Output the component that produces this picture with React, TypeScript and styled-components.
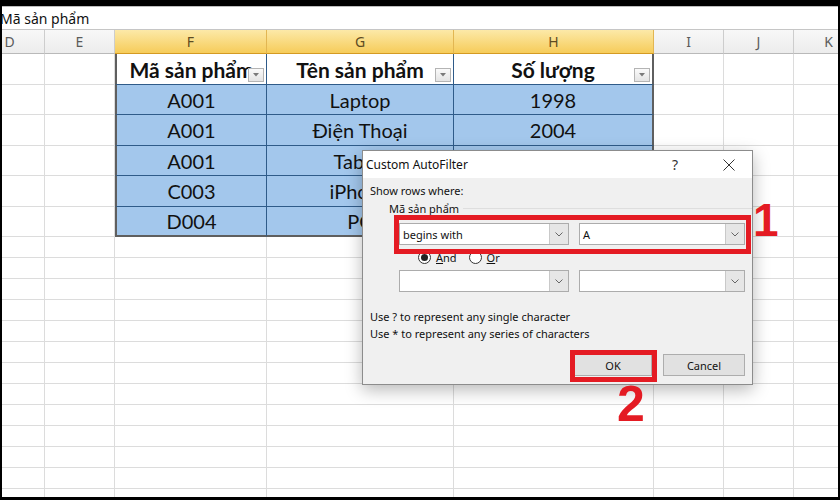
import React from 'react'
import styled, { createGlobalStyle, css } from 'styled-components'

const GlobalStyle = createGlobalStyle`
  html, body {
    margin: 0;
    padding: 0;
    background: #000;
  }
`

const Frame = styled.div`
  position: relative;
  width: 840px;
  height: 500px;
  box-sizing: border-box;
  padding: 6px 2px 3px 2px;
  background: #000;
  overflow: hidden;
  display: flex;
  flex-direction: column;
`

const Sheet = styled.div`
  flex: 1;
  min-height: 0;
  background: #fff;
  display: flex;
  flex-direction: column;
  overflow: hidden;
`

const FormulaBar = styled.div`
  height: 22px;
  flex: none;
  border-top: 1px solid #bdbdbd;
  border-bottom: 1px solid #c6c6c6;
  display: flex;
  align-items: center;
  font-family: 'Noto Sans', sans-serif;
  font-size: 14px;
  color: #111;
  white-space: nowrap;
  text-indent: -2px;
`

const Grid = styled.div`
  margin-left: -27px;
  display: grid;
  grid-template-columns: 70px 70px 152px 187px 200px 70px 70px 70px;
  grid-template-rows: 24px 31px 30px 31px 30px 31px 30px;
  grid-auto-rows: 21px;
`

const ColHead = styled.div<{ $sel?: boolean }>`
  box-sizing: border-box;
  display: flex;
  align-items: center;
  justify-content: center;
  font-family: 'Noto Sans', sans-serif;
  font-size: 14px;
  color: #5b5b5b;
  background: linear-gradient(#f8f8f8, #ececec);
  border-right: 1px solid #cdcdcd;
  border-bottom: 1px solid #b9b9b9;
  ${p => p.$sel && css`
    background: linear-gradient(#fce9a8, #f6cc5a);
    border-right-color: #e2b652;
    border-bottom-color: #d49a22;
    color: #5d4b22;
  `}
`

type Kind = 'plain' | 'head' | 'data'

const Cell = styled.div<{ $kind: Kind; $first?: boolean; $last?: boolean; $bottom?: boolean }>`
  position: relative;
  box-sizing: border-box;
  display: flex;
  align-items: center;
  justify-content: center;
  white-space: nowrap;
  overflow: hidden;
  font-family: Lato, 'Noto Sans', sans-serif;
  font-size: 20px;
  color: #111;
  border-right: 1px solid #dcdcdc;
  border-bottom: 1px solid #dcdcdc;
  ${p => p.$kind !== 'plain' && css`
    border-right-color: #2f5b89;
    border-bottom-color: #2f5b89;
  `}
  ${p => p.$kind === 'data' && css`
    background: #a3c7ec;
  `}
  ${p => p.$kind === 'head' && css`
    background: #fff;
    font-weight: 700;
    font-size: 21px;
    padding-top: 1px;
  `}
  ${p => p.$first && css`
    border-left: 2px solid #5f5f5f;
  `}
  ${p => p.$last && css`
    border-right: 2px solid #5f5f5f;
  `}
  ${p => p.$bottom && css`
    border-bottom: 2px solid #5f5f5f;
  `}
`

const FilterButton = styled.div`
  position: absolute;
  right: 2px;
  bottom: 2px;
  width: 16px;
  height: 14px;
  box-sizing: border-box;
  border: 1px solid #b4b4b4;
  background: linear-gradient(#fafafa, #e4e4e4);
  display: flex;
  align-items: center;
  justify-content: center;
`

const Dialog = styled.div`
  position: absolute;
  left: 362px;
  top: 150px;
  width: 391px;
  height: 235px;
  box-sizing: border-box;
  border: 1px solid #8c8c8c;
  background: #f0f0f0;
  box-shadow: 0 5px 16px rgba(0, 0, 0, 0.28);
  display: flex;
  flex-direction: column;
  font-family: 'Noto Sans', sans-serif;
  font-size: 11px;
  color: #111;
`

const TitleBar = styled.div`
  height: 27px;
  flex: none;
  background: #fff;
  display: flex;
  align-items: center;
  padding-left: 3px;
  font-size: 12px;
`

const TitleText = styled.div`
  flex: 1;
`

const TitleButton = styled.div<{ $gap?: number }>`
  width: ${p => (p.$gap ? 30 : 46)}px;
  margin-right: ${p => p.$gap ?? 0}px;
  height: 27px;
  display: flex;
  align-items: center;
  justify-content: center;
  color: #333;
  font-size: 14px;
`

const Body = styled.div`
  flex: 1;
  display: flex;
  flex-direction: column;
  padding: 4px 7px 0 0;
`

const Line = styled.div<{ $indent: number; $top?: number }>`
  height: 17px;
  line-height: 17px;
  padding-left: ${p => p.$indent}px;
  margin-top: ${p => p.$top ?? 0}px;
  white-space: nowrap;
`

const GroupLabel = styled.div`
  display: flex;
  align-items: center;
  gap: 4px;
  height: 16px;
  margin-top: 1px;
  padding-left: 26px;
  margin-right: -7px;
  &::after {
    content: '';
    flex: 1;
    height: 1px;
    background: #dedede;
  }
`

const ComboRow = styled.div<{ $top: number }>`
  display: flex;
  gap: 10px;
  padding-left: 36px;
  margin-top: ${p => p.$top}px;
`

const Combo = styled.div<{ $w: number }>`
  width: ${p => p.$w}px;
  height: 22px;
  box-sizing: border-box;
  border: 1px solid #acacac;
  background: #fff;
  display: flex;
  align-items: stretch;
`

const ComboText = styled.div`
  flex: 1;
  padding-left: 3px;
  display: flex;
  align-items: center;
  font-size: 11px;
`

const ComboArrow = styled.div`
  width: 18px;
  background: #e6e6e6;
  border-left: 1px solid #c9c9c9;
  display: flex;
  align-items: center;
  justify-content: center;
`

const RadioRow = styled.div`
  display: flex;
  align-items: center;
  height: 14px;
  margin-top: 5px;
  padding-left: 55px;
`

const Radio = styled.span<{ $on?: boolean }>`
  width: 13px;
  height: 13px;
  box-sizing: border-box;
  border-radius: 50%;
  border: 1px solid #333;
  background: #fff;
  display: inline-flex;
  align-items: center;
  justify-content: center;
  margin-right: 5px;
  &::after {
    content: '';
    width: 7px;
    height: 7px;
    border-radius: 50%;
    background: ${p => (p.$on ? '#222' : 'transparent')};
  }
`

const RadioLabel = styled.span`
  margin-right: 12px;
  u {
    text-decoration: underline;
  }
`

const Buttons = styled.div`
  display: flex;
  justify-content: flex-end;
  gap: 11px;
  margin-top: 12px;
`

const Button = styled.div<{ $w: number }>`
  width: ${p => p.$w}px;
  height: 22px;
  box-sizing: border-box;
  border: 1px solid #adadad;
  background: #e1e1e1;
  display: flex;
  align-items: center;
  justify-content: center;
  font-size: 11px;
`

const Mark = styled.div<{ $l: number; $t: number; $w: number; $h: number }>`
  position: absolute;
  left: ${p => p.$l}px;
  top: ${p => p.$t}px;
  width: ${p => p.$w}px;
  height: ${p => p.$h}px;
  box-sizing: border-box;
  border: 5px solid #e41b23;
`

const Step = styled.div<{ $l: number; $t: number; $size: number }>`
  position: absolute;
  left: ${p => p.$l}px;
  top: ${p => p.$t}px;
  font-family: 'Liberation Sans', Arial, sans-serif;
  font-weight: 700;
  font-size: ${p => p.$size}px;
  line-height: 1;
  color: #e41b23;
`

const Chevron = () => (
  <svg width='8' height='5' viewBox='0 0 8 5'>
    <path d='M0.5 0.5 L4 4 L7.5 0.5' fill='none' stroke='#666' strokeWidth='1' />
  </svg>
)

const Triangle = () => (
  <svg width='6' height='4' viewBox='0 0 6 4'>
    <path d='M0 0 H6 L3 3.5 Z' fill='#7a7a7a' />
  </svg>
)

const letters = ['D', 'E', 'F', 'G', 'H', 'I', 'J', 'K']
const header = ['Mã sản phẩm', 'Tên sản phẩm', 'Số lượng']
const rows = [
  ['A001', 'Laptop', '1998'],
  ['A001', 'Điện Thoại', '2004'],
  ['A001', 'Tablet', '2010'],
  ['C003', 'iPhone', '2007'],
  ['D004', 'PC', '1981']
]

const blank = (key: string) => <Cell key={key} $kind='plain' />

export default function App () {
  const tableRow = (cells: string[], r: number, kind: Kind) => [
    blank(`d${r}`),
    blank(`e${r}`),
    ...cells.map((text, c) => (
      <Cell
        key={`t${r}-${c}`}
        $kind={kind}
        $first={c === 0}
        $last={c === 2}
        $bottom={r === rows.length}
      >
        {text}
        {kind === 'head' && <FilterButton><Triangle /></FilterButton>}
      </Cell>
    )),
    blank(`i${r}`),
    blank(`j${r}`),
    blank(`k${r}`)
  ]

  return (
    <Frame>
      <GlobalStyle />
      <Sheet>
        <FormulaBar>Mã sản phẩm</FormulaBar>
        <Grid>
          {letters.map(l => (
            <ColHead key={l} $sel={l === 'F' || l === 'G' || l === 'H'}>{l}</ColHead>
          ))}
          {tableRow(header, 0, 'head')}
          {rows.map((r, i) => tableRow(r, i + 1, 'data'))}
          {Array.from({ length: 14 * 8 }, (_, i) => blank(`b${i}`))}
        </Grid>
      </Sheet>

      <Dialog>
        <TitleBar>
          <TitleText>Custom AutoFilter</TitleText>
          <TitleButton $gap={16}>?</TitleButton>
          <TitleButton>
            <svg width='12' height='12' viewBox='0 0 12 12'>
              <path d='M0.5 0.5 L11.5 11.5 M11.5 0.5 L0.5 11.5' stroke='#333' strokeWidth='1' />
            </svg>
          </TitleButton>
        </TitleBar>
        <Body>
          <Line $indent={7}>Show rows where:</Line>
          <GroupLabel>Mã sản phẩm</GroupLabel>
          <ComboRow $top={7}>
            <Combo $w={170}>
              <ComboText>begins with</ComboText>
              <ComboArrow><Chevron /></ComboArrow>
            </Combo>
            <Combo $w={166}>
              <ComboText>A</ComboText>
              <ComboArrow><Chevron /></ComboArrow>
            </Combo>
          </ComboRow>
          <RadioRow>
            <Radio $on />
            <RadioLabel><u>A</u>nd</RadioLabel>
            <Radio />
            <RadioLabel><u>O</u>r</RadioLabel>
          </RadioRow>
          <ComboRow $top={6}>
            <Combo $w={170}>
              <ComboText />
              <ComboArrow><Chevron /></ComboArrow>
            </Combo>
            <Combo $w={166}>
              <ComboText />
              <ComboArrow><Chevron /></ComboArrow>
            </Combo>
          </ComboRow>
          <Line $indent={7} $top={16}>Use ? to represent any single character</Line>
          <Line $indent={7}>Use * to represent any series of characters</Line>
          <Buttons>
            <Button $w={78}>OK</Button>
            <Button $w={82}>Cancel</Button>
          </Buttons>
        </Body>
      </Dialog>

      <Mark $l={394} $t={215} $w={357} $h={39} />
      <Step $l={753} $t={197} $size={46}>1</Step>
      <Mark $l={570} $t={350} $w={87} $h={32} />
      <Step $l={617} $t={379} $size={50}>2</Step>
    </Frame>
  )
}
